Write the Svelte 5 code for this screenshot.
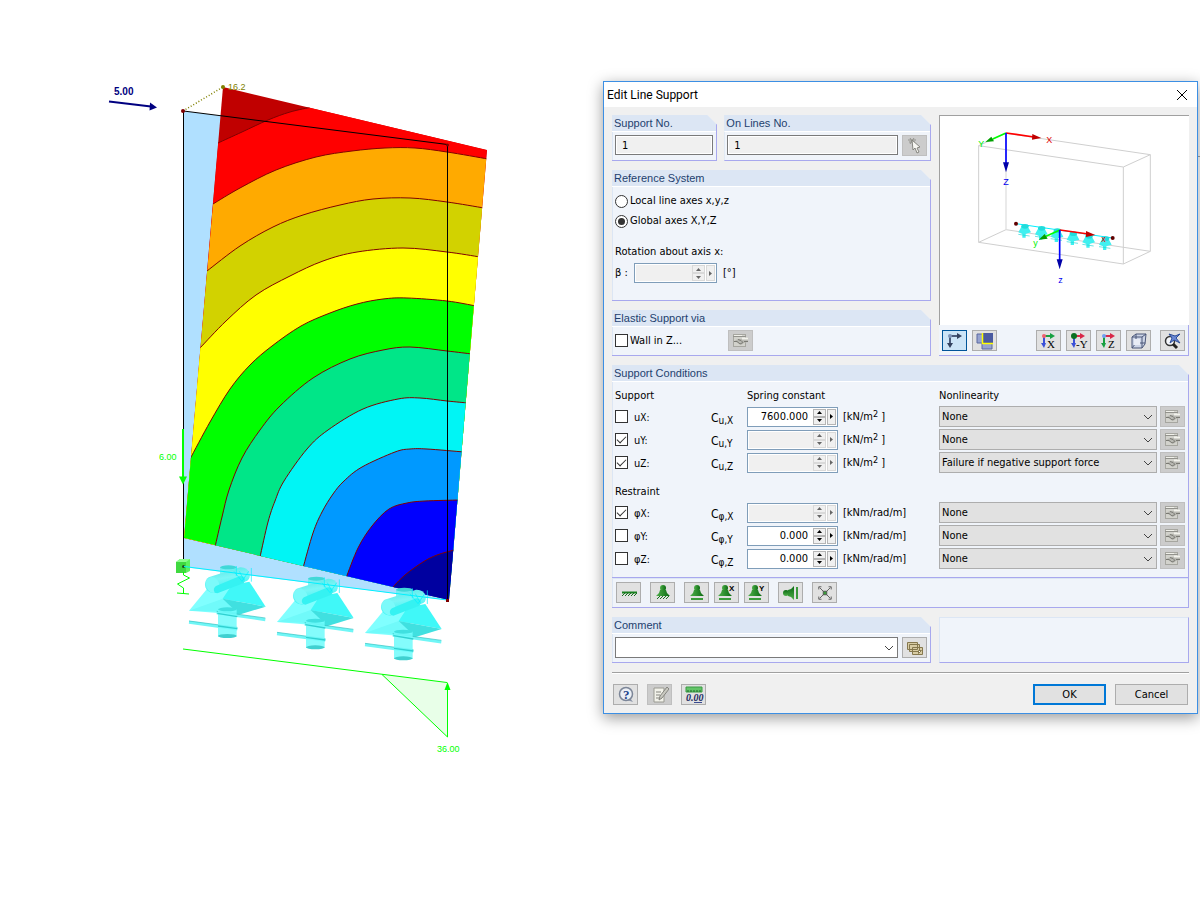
<script lang="ts">
	type Point = [number, number]

	type Band = {
		color: string
		line: Point[]
		rest: Point[]
	}

	type SpringRow = {
		id: string
		symbol: string
		axis: string
		checked: boolean
		value: string
		unit: string
		square?: boolean
		nonlinearity: string
	}

	// corners of the deformed wall
	const TOP_LEFT: Point = [223, 87]
	const TOP_RIGHT: Point = [487, 150]
	const BOTTOM_RIGHT: Point = [449, 600]
	const BOTTOM_LEFT: Point = [184, 538]

	// each band is painted over the one before it, down to the fixed corner
	const bands: Band[] = [
		{ color: '#ff0000', line: [[218, 143], [242, 132], [268, 120], [290, 112], [312, 107]], rest: [TOP_RIGHT, BOTTOM_RIGHT, BOTTOM_LEFT] },
		{ color: '#ffaa00', line: [[213, 204], [240, 188], [276, 170], [316, 157], [352, 151], [385, 148], [415, 148], [447, 152], [488, 159]], rest: [BOTTOM_RIGHT, BOTTOM_LEFT] },
		{ color: '#d2d200', line: [[207, 271], [240, 246], [273, 227], [303, 215], [340, 205], [373, 199], [410, 198], [447, 202], [484, 208]], rest: [BOTTOM_RIGHT, BOTTOM_LEFT] },
		{ color: '#ffff00', line: [[200, 348], [226, 321], [256, 295], [290, 276], [323, 261], [357, 252], [403, 248], [447, 252], [480, 257]], rest: [BOTTOM_RIGHT, BOTTOM_LEFT] },
		{ color: '#00ff00', line: [[190, 459], [210, 422], [230, 389], [250, 365], [272, 346], [301, 326], [330, 313], [357, 304], [383, 299], [407, 298], [447, 301], [476, 306]], rest: [BOTTOM_RIGHT, BOTTOM_LEFT] },
		{ color: '#00e688', line: [[215, 547], [222, 517], [229, 490], [242, 458], [260, 430], [280, 406], [313, 378], [350, 359], [383, 350], [410, 347], [447, 351], [472, 354]], rest: [BOTTOM_RIGHT] },
		{ color: '#00f5f5', line: [[260, 557], [268, 522], [275, 501], [284, 481], [307, 449], [328, 430], [363, 409], [398, 399], [420, 398], [447, 401], [468, 403]], rest: [BOTTOM_RIGHT] },
		{ color: '#0099ff', line: [[303, 568], [313, 533], [322, 512], [333, 494], [344, 481], [362, 467], [395, 452], [410, 449], [427, 449], [464, 452]], rest: [BOTTOM_RIGHT] },
		{ color: '#0000ff', line: [[346, 578], [358, 548], [372, 526], [389, 509], [407, 503], [425, 501], [459, 500]], rest: [BOTTOM_RIGHT] },
		{ color: '#0000a0', line: [[392, 588], [405, 575], [423, 562], [437, 555], [454, 550]], rest: [BOTTOM_RIGHT] }
	]

	const supports: Point[] = [[0, 0], [264, 34], [528, 67]]
	const miniSupports: Point[] = [[282, 460], [332, 466], [379, 473], [427, 482], [474, 490], [524, 497]]

	const translations: SpringRow[] = [
		{ id: 'ux', symbol: 'u', axis: 'X', checked: false, value: '7600.000', unit: '[kN/m', square: true, nonlinearity: 'None' },
		{ id: 'uy', symbol: 'u', axis: 'Y', checked: true, value: '', unit: '[kN/m', square: true, nonlinearity: 'None' },
		{ id: 'uz', symbol: 'u', axis: 'Z', checked: true, value: '', unit: '[kN/m', square: true, nonlinearity: 'Failure if negative support force' }
	]

	const rotations: SpringRow[] = [
		{ id: 'phix', symbol: 'φ', axis: 'X', checked: true, value: '', unit: '[kNm/rad/m]', nonlinearity: 'None' },
		{ id: 'phiy', symbol: 'φ', axis: 'Y', checked: false, value: '0.000', unit: '[kNm/rad/m]', nonlinearity: 'None' },
		{ id: 'phiz', symbol: 'φ', axis: 'Z', checked: false, value: '0.000', unit: '[kNm/rad/m]', nonlinearity: 'None' }
	]

	let axes = $state('global')

	function polygon(points: Point[]): string {
		return points.map(p => p.join(',')).join(' ')
	}

	// Catmull-Rom spline through the points
	function smooth(p: Point[]): string {
		let d = `M${p[0]}`
		for (let i = 0; i < p.length - 1; i++) {
			const a = p[i - 1] ?? p[i]
			const b = p[i]
			const c = p[i + 1]
			const e = p[i + 2] ?? c
			d += ` C${b[0] + (c[0] - a[0]) / 6} ${b[1] + (c[1] - a[1]) / 6} ${c[0] - (e[0] - b[0]) / 6} ${c[1] - (e[1] - b[1]) / 6} ${c[0]} ${c[1]}`
		}
		return d
	}
</script>

{#snippet editIcon()}
	<svg width="17" height="15" viewBox="0 0 17 15" fill="none">
		<rect x="1.500" y="1.500" width="12" height="12" fill="#d2d2cc" stroke="#a6a6a0" />
		<path d="M1 3.500h13" stroke="#92928c" />
		<path d="M2 2.500h8" stroke="#f0f0ea" />
		<path d="M2 8l4-2h5l5-2v5l-4 1-3 2-3-2z" fill="#b8b8b2" />
		<path d="M2 8.500h3l3 2.500 3-1.500M6 6.500l3 1 2 2M12 8.500h4" stroke="#7a7a74" />
		<path d="M10 5.500h6" stroke="#f2f2ec" stroke-width="2" />
	</svg>
{/snippet}

{#snippet chevron()}
	<svg class="chevron" width="10" height="6" viewBox="0 0 10 6" fill="none">
		<path d="M1 1l4 4 4-4" stroke="#444" />
	</svg>
{/snippet}

{#snippet pawn()}
	<circle cx="9" cy="4" r="3" fill="url(#pawn)" />
	<path d="M6 6h6l1 3 3 3H2l3-3z" fill="url(#pawn)" />
{/snippet}

{#snippet spinner(label: string, value: string, disabled: boolean)}
	<span class="spinner" class:off={disabled}>
		<input type="text" aria-label={label} {value} {disabled}>
		<span class="steps">
			<button type="button" aria-label="{label} up" {disabled}><svg width="5" height="3" viewBox="0 0 5 3"><path d="M0 3l2.500-3L5 3z" /></svg></button>
			<button type="button" aria-label="{label} down" {disabled}><svg width="5" height="3" viewBox="0 0 5 3"><path d="M0 0l2.500 3L5 0z" /></svg></button>
		</span>
		<button type="button" class="more" aria-label="{label} list" {disabled}><svg width="3" height="5" viewBox="0 0 3 5"><path d="M0 0l3 2.500L0 5z" /></svg></button>
	</span>
{/snippet}

{#snippet springRow(row: SpringRow)}
	<div class="condition">
		<label class="check symbol"><input type="checkbox" checked={row.checked}><span>{row.symbol}<small>{row.axis}:</small></span></label>
		<span class="constant">C<sub>{row.symbol},{row.axis}</sub></span>
		{@render spinner(`C ${row.symbol},${row.axis}`, row.value, row.value === '')}
		<span class="unit">{row.unit}{#if row.square}<sup>2</sup> ]{/if}</span>
		<span class="combo">
			<select aria-label="Nonlinearity {row.symbol}{row.axis}">
				<option>{row.nonlinearity}</option>
			</select>
			{@render chevron()}
		</span>
		<button type="button" class="tool flat" disabled aria-label="Edit nonlinearity">{@render editIcon()}</button>
	</div>
{/snippet}

<main>
	<svg class="model" viewBox="0 0 603 900" font-family="Liberation Sans, Arial, sans-serif" font-size="10">
		<defs>
			<clipPath id="wall">
				<polygon points={polygon([TOP_LEFT, TOP_RIGHT, BOTTOM_RIGHT, BOTTOM_LEFT])} />
			</clipPath>
			<linearGradient id="pawn" x1="0" x2="1">
				<stop offset="0" stop-color="#4fb04a" />
				<stop offset="1" stop-color="#0b6a12" />
			</linearGradient>
			<linearGradient id="tube" x1="0" x2=".3" y1="0" y2="1">
				<stop offset="0" stop-color="#4fe3e3" />
				<stop offset=".5" stop-color="#7cf6f6" />
				<stop offset="1" stop-color="#2ff4f4" />
			</linearGradient>
		</defs>

		<polygon points="183,111 447,144 447,600 183,567" fill="#b0e0ff" />
		<g clip-path="url(#wall)">
			<rect x="180" y="80" width="310" height="525" fill="#c00000" />
			{#each bands as band}
				<path d="{smooth(band.line)} L{band.rest.join(' L')} Z" fill={band.color} />
				<path d={smooth(band.line)} fill="none" stroke="#800000" />
			{/each}
		</g>
		<path d="M183.500 566V111L447.500 144.500V600" fill="none" stroke="#000" />
		<circle cx="447.500" cy="145" r="1.500" fill="#800000" />

		<path d="M183 111L223 87" stroke="#808000" stroke-width="1.500" stroke-dasharray="1 2" />
		<circle cx="223" cy="87" r="2" fill="#808000" />
		<circle cx="183" cy="111" r="2" fill="#800000" />
		<text x="228" y="90" font-size="9" fill="#808000">16.2</text>

		<!-- horizontal load -->
		<text x="114" y="95" font-weight="bold" fill="#000080">5.00</text>
		<path d="M109 101.500L151 106.500" stroke="#000080" stroke-width="2" />
		<path d="M150 102.500L157 107.500L149.500 110.500z" fill="#000080" />

		<!-- vertical reaction and spring -->
		<text x="159" y="460" fill="#0f0" font-size="9">6.00</text>
		<path d="M183 429v48" stroke="#0f0" stroke-width="2" />
		<path d="M179 476.500h8l-4 8z" fill="#0f0" />
		<path d="M176 562l4-3h10v12l-4 2h-10z" fill="#5cf25c" />
		<path d="M176 562h10v11h-10z" fill="#3fd93f" />
		<path d="M176 562l4-3h10l-4 3z" fill="#8cff8c" />
		<circle cx="183.500" cy="566.500" r="1.500" fill="#205020" />
		<path d="M183.500 572v3l6 3-12 6 6 4v6M177 593l12 1" fill="none" stroke="#0f0" />

		{#each supports as [x, y]}
			<g transform="translate(160 530) scale(.33333) translate({x} {y})">
				<path d="M180 112v60h50v-60z" fill="#67f0f0" opacity=".8" />
				<ellipse cx="205" cy="112" rx="25" ry="6" fill="#40d8d8" />
				<path d="M87 242L155 160L215 165L235 200L185 250z" fill="#80ffff" />
				<path d="M268 155L317 230L188 206L215 165z" fill="#40f8f8" />
				<path d="M188 206L317 230L232 256L175 246z" fill="#40e0e0" />
				<path d="M188 206L230 246L87 242z" fill="#70fafa" />
				<path d="M146 142L240 112C268 110 278 140 262 152L170 188C140 196 122 160 146 142z" fill="url(#tube)" />
				<ellipse cx="158" cy="165" rx="20" ry="24" transform="rotate(-20 158 165)" fill="#7cfafa" />
				<path d="M168 168L240 138C256 138 258 152 250 160L172 190C160 190 158 174 168 168z" fill="#35f2f2" />
				<path d="M170 248L316 269M87 277L232 297" stroke="#70f6f6" stroke-width="9" />
				<path d="M170 244L316 264M87 273L232 292" stroke="#30c0c0" stroke-width="2" />
				<path d="M174 238h56v82h-56z" fill="#6ffcfc" opacity=".85" />
				<ellipse cx="202" cy="238" rx="28" ry="6" fill="#40e0e0" />
				<ellipse cx="202" cy="318" rx="28" ry="6" fill="#40d0d0" />
				<path d="M172 250L232 260M174 288L232 296" stroke="#30d0d0" stroke-width="4" />
				<path d="M229 108v30M274 114v41M222 124l24 30 20-30M238 124l14 26" fill="none" stroke="#00f0ff" stroke-width="2" />
			</g>
		{/each}
		<path d="M184 566.500L447 600" stroke="#00f0ff" />
		<rect x="446" y="599" width="3" height="3" fill="#800000" />

		<!-- line reaction diagram -->
		<path d="M382 674.500L447.500 682.500V737z" fill="#e8ffe8" />
		<path d="M183 649L447 682.500M382 674.500L447.500 737V688" fill="none" stroke="#0f0" />
		<path d="M444.500 690h6l-3-8z" fill="#0f0" />
		<text x="437" y="752" fill="#0f0" font-size="9">36.00</text>
	</svg>

	<form class="dialog" onsubmit={e => e.preventDefault()}>
		<header>
			<h1>Edit Line Support</h1>
			<button type="button" aria-label="Close">
				<svg width="12" height="12" viewBox="0 0 12 12"><path d="M1 1l10 10M11 1L1 11" stroke="#000" /></svg>
			</button>
		</header>

		<div class="content">
			<div class="top">
				<div class="stack">
					<div class="numbers">
						<section class="panel support-no">
							<h2><label for="support-no">Support No.</label></h2>
							<div class="fields"><input id="support-no" class="text" type="text" value="1" readonly></div>
						</section>
						<section class="panel lines-no">
							<h2><label for="lines-no">On Lines No.</label></h2>
							<div class="fields">
								<input id="lines-no" class="text" type="text" value="1" readonly>
								<button type="button" class="tool flat" disabled aria-label="Pick lines">
									<svg width="15" height="17" viewBox="0 0 15 17">
										<path d="M1 3h8M2 5h6M3 1l4 6M7 1L3 7" stroke="#92928c" />
										<path d="M5 3l1 10 2-2 2 5 2-1-2-4 3-1z" fill="#f6f6f2" stroke="#85857f" />
									</svg>
								</button>
							</div>
						</section>
					</div>

					<section class="panel reference">
						<h2>Reference System</h2>
						<div class="lines">
							<label class="check"><input type="radio" value="local" bind:group={axes}>Local line axes x,y,z</label>
							<label class="check"><input type="radio" value="global" bind:group={axes}>Global axes X,Y,Z</label>
							<p>Rotation about axis x:</p>
							<div class="beta"><span>β :</span>{@render spinner('β', '', true)}<span>[°]</span></div>
						</div>
					</section>

					<section class="panel">
						<h2>Elastic Support via</h2>
						<div class="elastic">
							<label class="check"><input type="checkbox">Wall in Z...</label>
							<button type="button" class="tool flat" disabled aria-label="Edit wall">{@render editIcon()}</button>
						</div>
					</section>
				</div>

				<div class="preview">
					<svg class="scene" viewBox="30 123 747 627" font-family="Liberation Sans, Arial, sans-serif" font-size="27" fill="none">
						<g stroke="#cfcfcf" stroke-width="3">
							<path d="M146 212L580 276L661 239L228 175ZM146 502L580 567L661 529L228 464ZM146 212V502M580 276V567M661 239V529" />
							<path d="M228 175V464" stroke="#e0e0e0" stroke-width="4" />
						</g>
						<path d="M258 446L548 489" stroke="#00f0ff" stroke-width="3" />
						{#each miniSupports as [x, y]}
							<path d="M{x - 17} {y + 12}l12-22h14l12 22-16 5v11h-10v-11z" fill="#40f0f0" />
							<path d="M{x - 17} {y + 18}l34 5" stroke="#20d8d8" stroke-width="2" />
							<ellipse cx={x + 3} cy={y - 6} rx="11" ry="7" fill="#20dcdc" />
						{/each}
						<circle cx="258" cy="446" r="6" fill="#600000" />
						<circle cx="548" cy="489" r="6" fill="#600000" />

						<path d="M228 174L312 186M390 465L475 477" stroke="#f00" stroke-width="5" />
						<path d="M307 177L334 189L306 194zM468 468L496 480L468 486z" fill="#c00000" />
						<path d="M228 174L188 192M390 465L348 484" stroke="#0f0" stroke-width="5" />
						<path d="M166 201L184 185L192 199zM326 494L344 477L353 491z" fill="#00a000" />
						<path d="M228 174V265M389 465V556" stroke="#00f" stroke-width="5" />
						<path d="M219 262h18l-9 30zM380 553h18l-9 30z" fill="#0000a8" />
						<text x="349" y="203" fill="#e00000">X</text>
						<text x="145" y="217" fill="#00f000">Y</text>
						<text x="220" y="330" fill="#0000f0">Z</text>
						<text x="514" y="500" fill="#e00000">x</text>
						<text x="310" y="512" fill="#00f000">y</text>
						<text x="385" y="624" fill="#0000f0">z</text>
					</svg>
					<div class="views">
						<button type="button" class="tool active" aria-label="Show axes">
							<svg width="18" height="18" viewBox="0 0 18 18"><path d="M4 4h8M4 4v8" stroke="#4a5a7a" stroke-width="2" /><path d="M11 1l5 3-5 3zM1 11h6l-3 5z" fill="#33415f" /><circle cx="4" cy="4" r="2" fill="#7d93b8" /></svg>
						</button>
						<button type="button" class="tool" aria-label="Show model">
							<svg width="18" height="18" viewBox="0 0 18 18"><path d="M1 2h8v9H1zM6 11h10v6H6z" fill="#96a3d0" stroke="#5a68a0" /><path d="M6 1h11v10H6z" fill="#4a5aa0" /><path d="M6.500 1v10.500H17" fill="none" stroke="#ff0" stroke-width="1.500" /></svg>
						</button>
						<button type="button" class="tool first-view" aria-label="View in X">
							<svg width="18" height="18" viewBox="0 0 18 18"><path d="M4 4h7" stroke="#18a040" stroke-width="2" /><path d="M10 1l5 3-5 3z" fill="#18a040" /><path d="M4 4v8" stroke="#3a50d8" stroke-width="2" /><path d="M1 11h5l-2 5z" fill="#3a50d8" /><circle cx="4" cy="4" r="2" fill="#f06070" /><text x="7" y="16" class="serif">X</text></svg>
						</button>
						<button type="button" class="tool" aria-label="View in -Y">
							<svg width="18" height="18" viewBox="0 0 18 18"><path d="M4 4h7" stroke="#d82848" stroke-width="2" /><path d="M10 1l5 3-5 3z" fill="#d82848" /><path d="M4 4v8" stroke="#3a50d8" stroke-width="2" /><path d="M1 11h5l-2 5z" fill="#3a50d8" /><circle cx="4" cy="4" r="3" fill="#087020" /><text x="6" y="16" class="serif">-Y</text></svg>
						</button>
						<button type="button" class="tool" aria-label="View in Z">
							<svg width="18" height="18" viewBox="0 0 18 18"><path d="M4 4h7" stroke="#d82848" stroke-width="2" /><path d="M10 1l5 3-5 3z" fill="#d82848" /><path d="M4 4v8" stroke="#18a040" stroke-width="2" /><path d="M1 11h5l-2 5z" fill="#18a040" /><circle cx="4" cy="4" r="2" fill="#70a0f0" /><text x="8" y="16" class="serif">Z</text></svg>
						</button>
						<button type="button" class="tool" aria-label="Isometric view">
							<svg width="18" height="18" viewBox="0 0 18 18" fill="none" stroke="#4a5678"><path d="M2 5l4-3h10l-1 10-3 4H2z" fill="#ccd4e6" /><path d="M2 5h10v11M12 5l4-3M6 2v9L2 16M6 11h9" /><rect x="4" y="7" width="6" height="6" fill="#e8ecf5" stroke="none" /></svg>
						</button>
						<button type="button" class="tool last-view" aria-label="Zoom to fit">
							<svg width="19" height="18" viewBox="0 0 19 18" fill="none"><circle cx="7" cy="9" r="4.500" fill="#f4f6fa" stroke="#333" stroke-width="1.500" /><path d="M10 12l4 4" stroke="#222" stroke-width="3" /><path d="M17 2l-4 4 4 5-6-3-4 3 2-5-3-4 6 2z" fill="#6a88d4" stroke="#2c4c98" /></svg>
						</button>
					</div>
				</div>
			</div>

			<div class="supports">
				<section class="panel">
					<h2>Support Conditions</h2>
					<div class="conditions">
						<div class="condition captions"><span>Support</span><span></span><span class="wide">Spring constant</span><span>Nonlinearity</span></div>
						{#each translations as row (row.id)}
							{@render springRow(row)}
						{/each}
						<p>Restraint</p>
						{#each rotations as row (row.id)}
							{@render springRow(row)}
						{/each}
					</div>
				</section>
				<div class="presets">
					<button type="button" class="tool" aria-label="Rigid">
						<svg width="18" height="18" viewBox="0 0 18 18"><path d="M2 8.500h15" stroke="#1a8020" stroke-width="2" /><path d="M2 12l3-3M5 12l3-3M8 12l3-3M11 12l3-3M14 12l3-3" stroke="#1a7020" /></svg>
					</button>
					<button type="button" class="tool" aria-label="Fixed">
						<svg width="18" height="18" viewBox="0 0 18 18">{@render pawn()}<path d="M3 15l3-3M6 15l3-3M9 15l3-3M12 15l3-3" stroke="#1a7020" /></svg>
					</button>
					<button type="button" class="tool" aria-label="Hinged">
						<svg width="18" height="18" viewBox="0 0 18 18">{@render pawn()}<path d="M3 15h12" stroke="#3a9a3a" stroke-width="2" /></svg>
					</button>
					<button type="button" class="tool" aria-label="Sliding in X">
						<svg width="18" height="18" viewBox="0 0 18 18"><g transform="translate(-2 0)">{@render pawn()}<path d="M3 15h12" stroke="#3a9a3a" stroke-width="2" /></g><text x="11" y="7" class="mark">X</text></svg>
					</button>
					<button type="button" class="tool" aria-label="Sliding in Y">
						<svg width="18" height="18" viewBox="0 0 18 18"><g transform="translate(-2 0)">{@render pawn()}<path d="M3 15h12" stroke="#3a9a3a" stroke-width="2" /></g><text x="11" y="7" class="mark">Y</text></svg>
					</button>
					<button type="button" class="tool" aria-label="Sliding in Z">
						<svg width="18" height="18" viewBox="0 0 18 18"><g transform="rotate(-90 9 9)">{@render pawn()}<path d="M3 15h12" stroke="#3a9a3a" stroke-width="2" /></g></svg>
					</button>
					<button type="button" class="tool" aria-label="Free">
						<svg width="16" height="16" viewBox="0 0 18 18"><path d="M3 3l4 4M15 3l-4 4M3 15l4-4M15 15l-4-4" stroke="#555" /><path d="M2 5V2h3M13 2h3v3M2 13v3h3M13 16h3v-3" fill="none" stroke="#555" /><rect x="7" y="7" width="4" height="4" fill="#3a9a3a" stroke="#555" /></svg>
					</button>
				</div>
			</div>

			<div class="bottom">
				<section class="panel">
					<h2><label for="comment">Comment</label></h2>
					<div class="fields">
						<span class="combo white">
							<select id="comment"><option></option></select>
							{@render chevron()}
						</span>
						<button type="button" class="tool" aria-label="Saved comments">
							<svg width="18" height="16" viewBox="0 0 18 16" fill="#d8cca4" stroke="#85784e"><path d="M1.500 2.500h10v7h-10zM3.500 4.500h10v7h-10zM6.500 7.500h10v7h-10z" /><path d="M12.500 13.500l3-3h-3z" fill="#fff" /></svg>
						</button>
					</div>
				</section>
				<div class="blank"></div>
			</div>

			<footer>
				<button type="button" class="tool" aria-label="Help">
					<svg width="18" height="18" viewBox="0 0 18 18"><path d="M13 12l3 4-6-2z" fill="#8a94a8" /><circle cx="9" cy="8" r="6.500" fill="#eceff5" stroke="#7c8698" stroke-width="1.500" /><text x="6" y="13" class="help">?</text></svg>
				</button>
				<button type="button" class="tool flat notes" aria-label="Notes">
					<svg width="18" height="18" viewBox="0 0 18 18"><path d="M3 2h10v14H3z" fill="#f2f2ea" stroke="#9a9a92" /><path d="M5 6h5M5 9h4M5 12h6" stroke="#85857f" /><path d="M16 1l2 2-7 9-3 2 1-4z" fill="#c8c8c0" stroke="#85857f" /></svg>
				</button>
				<button type="button" class="tool" aria-label="Units">
					<svg width="20" height="18" viewBox="0 0 20 18"><path d="M2 1h16v5H2z" fill="#63c468" stroke="#3a9a44" /><path d="M4 6V4M7 6V4M10 6V4M13 6V4M16 6V4" stroke="#1c6a28" /><text x="2" y="15" class="units">0.00</text><path d="M10 16.500h8" stroke="#3a4a90" /></svg>
				</button>
				<button type="submit" class="push ok">OK</button>
				<button type="button" class="push">Cancel</button>
			</footer>
		</div>
	</form>
	<div class="behind"></div>
</main>

<style>
	:global(body) {
		margin: 0;
		background: #fff;
	}

	main {
		display: grid;
		grid-template-columns: 603fr 595fr 2px;
		align-items: start;
		overflow: hidden;
		color: #000;
		font: 11px/14px "DejaVu Sans Condensed", Tahoma, "DejaVu Sans", sans-serif;
	}

	h1, h2, p {
		margin: 0;
		font-weight: normal;
	}

	button, input, select {
		box-sizing: border-box;
		margin: 0;
		padding: 0;
		border-radius: 0;
		color: inherit;
		font: inherit;
	}

	svg {
		display: block;
	}

	.model {
		width: 100%;
	}

	.dialog {
		margin-top: 81px;
		border: 1px solid #3c8fe4;
		background: #f0f0f0;
		box-shadow: 0 4px 14px rgba(0, 0, 0, .4);
	}

	header {
		display: flex;
		align-items: center;
		justify-content: space-between;
		height: 25px;
		padding: 0 9px 0 3px;
		background: #fff;
	}

	header h1 {
		font: 12px/16px Roboto, "Open Sans", sans-serif;
	}

	header button {
		border: 0;
		background: none;
	}

	.content {
		display: flex;
		flex-direction: column;
		gap: 9px;
		padding: 8px;
	}

	.top, .bottom {
		display: grid;
		grid-template-columns: minmax(0, 319fr) minmax(0, 250fr);
		gap: 8px;
	}

	.stack {
		display: flex;
		flex-direction: column;
		gap: 9px;
	}

	.numbers {
		display: flex;
		gap: 7px;
	}

	.support-no {
		flex: 105;
		min-width: 0;
	}

	.lines-no {
		flex: 207;
		min-width: 0;
	}

	.panel {
		box-sizing: border-box;
		border: solid #a8a8ee;
		border-width: 0 1px 1px 0;
		background: #f0f4fa;
		box-shadow: inset 1px 0 #dce6f4;
		clip-path: polygon(0 0, calc(100% - 10px) 0, 100% 10px, 100% 100%, 0 100%);
	}

	h2 {
		height: 16px;
		padding-left: 2px;
		border-bottom: 1px solid #fff;
		background: #dce6f4;
		color: #1e3f6e;
		font: 11px/16px "Liberation Sans", Arial, sans-serif;
	}

	.fields {
		display: flex;
		gap: 4px;
		padding: 3px 3px 4px;
	}

	.text {
		flex: 1;
		min-width: 0;
		height: 20px;
		padding: 0 6px;
		border: 1px solid #7a7a7a;
		background: #f0f0f0;
		box-shadow: inset 0 0 0 1px #fff;
	}

	.support-no .fields {
		padding-bottom: 5px;
	}

	.tool {
		display: flex;
		flex: none;
		align-items: center;
		justify-content: center;
		width: 25px;
		height: 21px;
		border: 1px solid #adadad;
		background: #e1e1e1;
	}

	.tool.flat {
		border-color: #bfbfbf;
		background: #ccc;
	}

	.tool.active {
		border-color: #005499;
		background: #cce4f7;
	}

	.lines {
		padding: 4px 3px 17px;
	}

	.lines p {
		padding: 14px 0 3px;
	}

	.check {
		display: flex;
		align-items: center;
		gap: 2px;
		height: 20px;
	}

	.check input {
		display: grid;
		place-items: center;
		width: 13px;
		height: 13px;
		border: 1px solid #333;
		background: #fff;
		appearance: none;
	}

	.check input[type="radio"] {
		border-radius: 50%;
	}

	.check input[type="radio"]:checked::before {
		width: 7px;
		height: 7px;
		border-radius: 50%;
		background: #333;
		content: "";
	}

	.check input[type="checkbox"]:checked::before {
		width: 8px;
		height: 4px;
		margin-bottom: 3px;
		border: solid #333;
		border-width: 0 0 1px 1px;
		content: "";
		transform: rotate(-45deg);
	}

	.beta {
		display: flex;
		align-items: center;
		gap: 6px;
		padding-top: 1px;
	}

	.beta span:first-child {
		width: 13px;
	}

	.beta .spinner {
		width: 83px;
	}

	.spinner {
		display: flex;
		box-sizing: border-box;
		height: 20px;
		padding: 1px;
		border: 1px solid #7f9db9;
		background: #fff;
	}

	.spinner input {
		flex: 1;
		min-width: 0;
		padding-right: 5px;
		border: 0;
		background: #fff;
		text-align: right;
	}

	.spinner.off input {
		background: #f0f0f0;
	}

	.steps {
		display: flex;
		flex-direction: column;
		width: 13px;
	}

	.spinner button {
		display: grid;
		flex: 1;
		place-items: center;
		border: 1px solid #b5b5b5;
		background: #f0f0f0;
	}

	.spinner .more {
		flex: none;
		width: 9px;
		margin-left: 1px;
	}

	.spinner.off button {
		border-color: #d9d9d9;
		fill: #666;
	}

	.elastic {
		display: flex;
		align-items: center;
		gap: 42px;
		padding: 3px 3px 4px;
	}

	.elastic .check {
		width: 71px;
		white-space: nowrap;
	}

	.preview {
		display: flex;
		flex-direction: column;
	}

	.scene {
		box-sizing: border-box;
		flex: 1;
		width: 100%;
		min-height: 0;
		border: solid #a0a0a0;
		border-width: 1px 0 0 1px;
		background: #fff;
	}

	.views {
		display: flex;
		gap: 5px;
		padding: 5px 3px 4px;
		border: solid #a8a8ee;
		border-width: 0 1px 1px 0;
		background: #f0f4fa;
	}

	.first-view {
		margin-left: auto;
	}

	.last-view {
		margin-left: 4px;
	}

	.serif {
		font: 11px "Liberation Serif", serif;
	}

	.mark {
		font: bold 8px "Liberation Sans", sans-serif;
	}

	.help {
		fill: #24448c;
		font: bold 13px "Liberation Serif", serif;
	}

	.units {
		fill: #202860;
		font: italic bold 10px "Liberation Serif", serif;
	}

	.conditions {
		padding: 7px 3px;
	}

	.conditions p {
		padding: 11px 0 2px;
	}

	.condition {
		display: grid;
		grid-template-columns: 96px 36px 91px 101px 1fr 28px;
		align-items: center;
		height: 23px;
	}

	.condition.captions {
		align-items: start;
		height: 16px;
	}

	.condition .tool {
		justify-self: end;
	}

	.wide {
		grid-column: 3 / 5;
	}

	.unit {
		padding-left: 5px;
		white-space: nowrap;
	}

	.symbol {
		gap: 6px;
	}

	.symbol span {
		padding-top: 3px;
	}

	small {
		font-size: 10px;
	}

	.constant {
		padding-top: 3px;
		font-size: 12px;
	}

	sub {
		font-size: 10px;
		line-height: 0;
		vertical-align: -2px;
	}

	sup {
		font-size: 9px;
		line-height: 0;
		vertical-align: 3px;
	}

	.combo {
		position: relative;
		display: block;
		flex: 1;
		height: 21px;
	}

	.combo select {
		display: block;
		width: 100%;
		height: 21px;
		padding: 0 18px 0 2px;
		border: 1px solid #adadad;
		background: #e1e1e1;
		appearance: none;
	}

	.combo.white select {
		border-color: #7a7a7a;
		background: #fff;
	}

	.chevron {
		position: absolute;
		top: 8px;
		right: 4px;
		pointer-events: none;
	}

	.presets {
		display: flex;
		gap: 9px;
		padding: 4px;
		border: solid #a8a8ee;
		border-width: 0 1px 1px 0;
		background: #f0f4fa;
		box-shadow: inset 1px 1px #dce6f4;
	}

	.presets .tool:nth-child(4), .presets .tool:nth-child(5) {
		margin-left: -4px;
	}

	.blank {
		border: 1px solid #a8a8ee;
		border-top-color: #dce6f4;
		border-left-color: #dce6f4;
		background: #f0f4fa;
	}

	footer {
		display: flex;
		align-items: center;
		gap: 9px;
		padding: 11px 1px 0;
		border-top: 1px solid #a0a0a0;
		box-shadow: inset 0 1px #fff;
	}

	.push {
		width: 73px;
		height: 21px;
		border: 1px solid #adadad;
		background: #e1e1e1;
	}

	.push.ok {
		margin-left: auto;
		border: 2px solid #0078d7;
	}

	/* edge of the application window that the dialog covers */
	.behind {
		height: 330px;
		margin-top: 156px;
		border-top: 1px solid #888;
		background: #d4d4d4;
	}
</style>
